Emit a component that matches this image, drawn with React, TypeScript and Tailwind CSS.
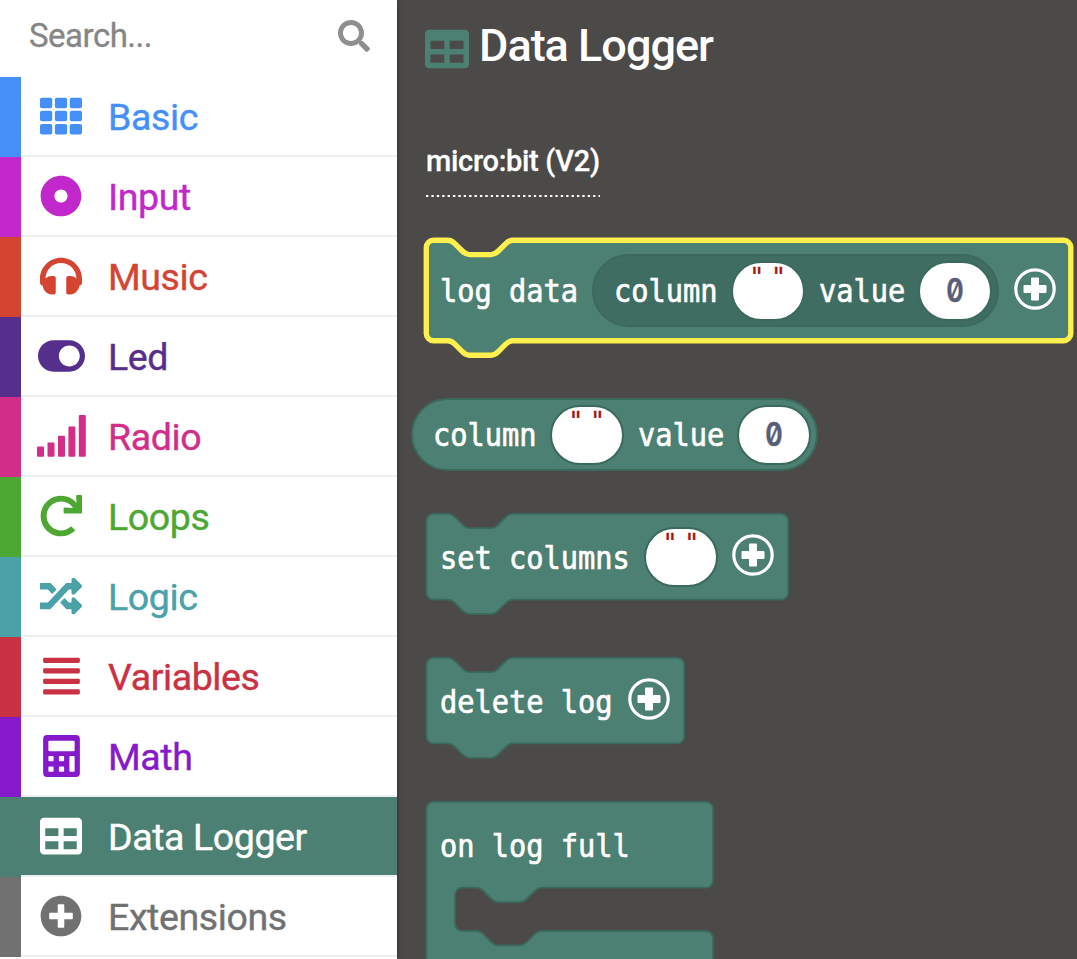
import React from "react";
import {
  FaTh,
  FaDotCircle,
  FaToggleOn,
  FaRedo,
  FaRandom,
  FaAlignJustify,
  FaTable,
  FaPlusCircle,
  FaSearch,
} from "react-icons/fa";

const CHAR_WIDTH = 17.25;

function HeadphonesIcon({ className }: { className?: string }) {
  return (
    <svg viewBox="0 0 512 512" fill="currentColor" className={className}>
      <path d="M256 32C114.500 32 0 146.500 0 288v51a32 32 0 0 0 17.700 28.600l15 7.400C42 434 84 480 144 480h24c13.300 0 24-10.700 24-24V280c0-13.300-10.700-24-24-24h-24c-28 0-58 10-77 30C69 178 152 96 256 96s187 82 189 190c-19-20-49-30-77-30h-24c-13.300 0-24 10.700-24 24v176c0 13.300 10.700 24 24 24h24c60 0 102-46 111.300-105l15-7.400A32 32 0 0 0 512 339v-51c0-141.500-114.500-256-256-256z" />
    </svg>
  );
}

function SignalIcon({ className }: { className?: string }) {
  return (
    <svg viewBox="0 0 49 42" fill="currentColor" className={className}>
      <rect x="0" y="31.4" width="7" height="10.4" rx="1" />
      <rect x="10.5" y="27.4" width="7" height="14.4" rx="1" />
      <rect x="21" y="20.8" width="7" height="21" rx="1" />
      <rect x="31.4" y="11.5" width="7" height="30.3" rx="1" />
      <rect x="41.8" y="0" width="7" height="41.8" rx="1" />
    </svg>
  );
}

function CalculatorIcon({ className }: { className?: string }) {
  return (
    <svg viewBox="0 0 448 512" fill="currentColor" fillRule="evenodd" className={className}>
      <path d="M48 0H400Q448 0 448 48V464Q448 512 400 512H48Q0 512 0 464V48Q0 0 48 0ZM76 70Q64 70 64 82V186Q64 198 76 198H372Q384 198 384 186V82Q384 70 372 70ZM76 256Q64 256 64 268V308Q64 320 76 320H116Q128 320 128 308V268Q128 256 116 256ZM204 256Q192 256 192 268V308Q192 320 204 320H244Q256 320 256 308V268Q256 256 244 256ZM76 384Q64 384 64 396V436Q64 448 76 448H116Q128 448 128 436V396Q128 384 116 384ZM204 384Q192 384 192 396V436Q192 448 204 448H244Q256 448 256 436V396Q256 384 244 384ZM332 256Q320 256 320 268V436Q320 448 332 448H372Q384 448 384 436V268Q384 256 372 256Z" />
    </svg>
  );
}

type IconType = React.ComponentType<{ className?: string }>;

const categories: {
  name: string;
  text: string;
  bar: string;
  Icon: IconType;
  size: string;
  active?: boolean;
}[] = [
  { name: "Basic", text: "text-[#458ff9]", bar: "bg-[#458ff9]", Icon: FaTh, size: "w-[42px] h-[42px]" },
  { name: "Input", text: "text-[#c127cb]", bar: "bg-[#c127cb]", Icon: FaDotCircle, size: "w-[42px] h-[42px]" },
  { name: "Music", text: "text-[#d54431]", bar: "bg-[#d54431]", Icon: HeadphonesIcon, size: "w-[42px] h-[42px]" },
  { name: "Led", text: "text-[#562e8c]", bar: "bg-[#562e8c]", Icon: FaToggleOn, size: "w-[47px] h-[42px]" },
  { name: "Radio", text: "text-[#d22d88]", bar: "bg-[#d22d88]", Icon: SignalIcon, size: "w-[49px] h-[42px]" },
  { name: "Loops", text: "text-[#4da833]", bar: "bg-[#4da833]", Icon: FaRedo, size: "w-[42px] h-[42px]" },
  { name: "Logic", text: "text-[#4aa2a8]", bar: "bg-[#4aa2a8]", Icon: FaRandom, size: "w-[42px] h-[42px]" },
  { name: "Variables", text: "text-[#ca3142]", bar: "bg-[#ca3142]", Icon: FaAlignJustify, size: "w-[37px] h-[42px]" },
  { name: "Math", text: "text-[#8619ca]", bar: "bg-[#8619ca]", Icon: CalculatorIcon, size: "w-[37px] h-[42px]" },
  { name: "Data Logger", text: "text-white", bar: "bg-[#4c8072]", Icon: FaTable, size: "w-[42px] h-[42px]", active: true },
  { name: "Extensions", text: "text-[#717171]", bar: "bg-[#717171]", Icon: FaPlusCircle, size: "w-[42px] h-[42px]" },
];

function Sidebar() {
  return (
    <aside className="z-10 flex h-full w-[397px] shrink-0 flex-col bg-white shadow-[0_0_4px_rgba(0,0,0,0.5)]">
      <div className="flex h-[77px] shrink-0 items-start justify-between pl-[29px] pr-[27px] pt-[18px]">
        <span className="text-[33px] leading-9 tracking-[-0.5px] text-[#868686] [-webkit-text-stroke:0.3px_currentColor]">
          Search...
        </span>
        <FaSearch className="mt-[2px] h-8 w-8 text-[#8f8f8f]" />
      </div>
      {categories.map(({ name, text, bar, Icon, size, active }) => (
        <div key={name} className="flex h-20 shrink-0">
          <div className={`w-[21px] ${bar}`} />
          <div
            className={`flex flex-1 items-center border-b-2 border-[#ecf0f0] pt-[1px] ${active ? "bg-[#4c8072]" : ""} ${text}`}
          >
            <span className="flex w-20 justify-center pb-[2px]">
              <Icon className={size} />
            </span>
            <span className="ml-[7px] whitespace-nowrap pt-[1px] text-[37.5px] leading-[44px] tracking-[-0.4px] [-webkit-text-stroke:0.4px_currentColor]">
              {name}
            </span>
          </div>
        </div>
      ))}
    </aside>
  );
}

const notch = "c3.6,0 5.4,1.8 7.2,3.6 l7.2,7.2 c1.8,1.8 3.6,3.6 7.2,3.6 h21.6 c3.6,0 5.4,-1.8 7.2,-3.6 l7.2,-7.2 c1.8,-1.8 3.6,-3.6 7.2,-3.6";
const tab = "c-3.6,0 -5.4,1.8 -7.2,3.6 l-7.2,7.2 c-1.8,1.8 -3.6,3.6 -7.2,3.6 h-21.6 c-3.6,0 -5.4,-1.8 -7.2,-3.6 l-7.2,-7.2 c-1.8,-1.8 -3.6,-3.6 -7.2,-3.6";

function statementPath(w: number, h: number) {
  return `M0,7.2 A7.2,7.2 0 0 1 7.2,0 H21.6 ${notch} H${w - 7.2} A7.2,7.2 0 0 1 ${w},7.2 V${h - 7.2} A7.2,7.2 0 0 1 ${w - 7.2},${h} H86.4 ${tab} H7.2 A7.2,7.2 0 0 1 0,${h - 7.2} Z`;
}

function Shape({ d, selected }: { d: string; selected?: boolean }) {
  return (
    <svg className="absolute inset-0 h-full w-full overflow-visible">
      <path
        d={d}
        transform={selected ? "translate(0.3 0.2)" : "translate(0.4 0.8)"}
        fill="#4c8072"
        stroke={selected ? "#fff04d" : "#3b6a5d"}
        strokeWidth={selected ? 5.4 : 1.8}
      />
    </svg>
  );
}

function Label({ children }: { children: string }) {
  return (
    <span
      className="relative block h-8 whitespace-pre font-['DejaVu_Sans_Mono',monospace] text-[31.5px] leading-8 text-white [-webkit-text-stroke:0.7px_currentColor]"
      style={{ width: children.length * CHAR_WIDTH }}
    >
      <span className="inline-block origin-left scale-x-[0.91]">{children}</span>
    </span>
  );
}

function TextField() {
  return (
    <span className="relative flex h-[60px] w-[74px] justify-center rounded-[30px] border-2 border-[#3b6a5d] bg-white">
      <span className="-ml-1 mt-[-1px] whitespace-pre font-['DejaVu_Sans_Mono',monospace] text-[25px] leading-[30px] tracking-[-4.2px] text-[#a31515] [-webkit-text-stroke:0.3px_currentColor]">
        {'" "'}
      </span>
    </span>
  );
}

function NumberField() {
  return (
    <span className="relative flex h-[60px] w-[74px] items-center justify-center rounded-[30px] border-2 border-[#3b6a5d] bg-white">
      <span className="mb-[2px] inline-block scale-x-[0.8] font-['Inter',sans-serif] text-[33px] font-semibold leading-8 text-[#575e75] [-webkit-text-stroke:0.5px_currentColor] [font-feature-settings:'zero']">
        0
      </span>
    </span>
  );
}

function PlusButton() {
  return (
    <svg viewBox="0 0 42 42" className="relative mt-[-3px] h-[42px] w-[42px] shrink-0">
      <circle cx="21" cy="21" r="19.2" fill="none" stroke="#fff" strokeWidth="3.2" />
      <path
        d="M18,9.5h6q1,0 1,1v6.500h6.500q1,0 1,1v6q0,1 -1,1h-6.500v6.500q0,1 -1,1h-6q-1,0 -1,-1v-6.500h-6.500q-1,0 -1,-1v-6q0,-1 1,-1h6.500v-6.500q0,-1 1,-1z"
        fill="#fff"
      />
    </svg>
  );
}

function ColumnValue() {
  return (
    <>
      <Label>column</Label>
      <span className="ml-[13px]">
        <TextField />
      </span>
      <span className="ml-[14px]">
        <Label>value</Label>
      </span>
      <span className="ml-[13px]">
        <NumberField />
      </span>
    </>
  );
}

export default function App() {
  return (
    <div className="flex h-[959px] w-[1077px] overflow-hidden bg-[#4c4949] font-['Roboto',sans-serif]">
      <Sidebar />
      <main className="flex flex-1 flex-col items-start pl-[29px]">
        <h1 className="mt-5 ml-[-1px] flex h-[52px] items-center text-[45px] font-medium leading-[52px] tracking-[-1px] text-white">
          <FaTable className="mr-[10px] mt-[5px] h-11 w-11 text-[#4c8072]" />
          Data Logger
        </h1>
        <h2 className="mt-[72px] h-[35px] text-[29px] font-medium leading-[35px] tracking-[-0.3px] text-white [-webkit-text-stroke:0.3px_currentColor]">
          micro:bit (V2)
        </h2>
        <svg className="mt-4 h-[2px] w-[174px]">
          <line x1="0" y1="1" x2="174" y2="1" stroke="#fff" strokeWidth="2" strokeDasharray="2.4 2.99" />
        </svg>

        <div className="relative mt-[43px] flex h-[101px] w-[645px] items-center pl-[14px]">
          <Shape d={statementPath(644.5, 100.6)} selected />
          <Label>log data</Label>
          <span className="relative ml-[14px] flex h-[73px] w-[407px] items-center rounded-full border-2 border-[#3b6a5d] bg-[#406d61] pl-5">
            <ColumnValue />
          </span>
          <span className="ml-[15px]">
            <PlusButton />
          </span>
        </div>

        <div className="mt-[57px] ml-[-15px] flex h-[73px] w-[407px] items-center rounded-full border-2 border-[#3b6a5d] bg-[#4c8072] pl-5">
          <ColumnValue />
        </div>

        <div className="relative mt-[42px] flex h-[87px] w-[362px] items-center pl-[14px]">
          <Shape d={statementPath(361.8, 85.8)} />
          <span className="pt-[2px]">
            <Label>set columns</Label>
          </span>
          <span className="ml-[14px]">
            <TextField />
          </span>
          <span className="ml-[14px]">
            <PlusButton />
          </span>
        </div>

        <div className="relative mt-[57px] flex h-[87px] w-[258px] items-center pl-[14px]">
          <Shape d={statementPath(257.8, 85.6)} />
          <span className="pt-[2px]">
            <Label>delete log</Label>
          </span>
          <span className="ml-[15px]">
            <PlusButton />
          </span>
        </div>

        <div className="relative mt-[57px] flex h-[87px] w-[287px] shrink-0 items-center pl-[14px] pt-[2px]">
          <Shape
            d={`M0,7.200 A7.200,7.200 0 0 1 7.200,0 H279.400 A7.200,7.200 0 0 1 286.600,7.200 V78.700 A7.200,7.200 0 0 1 279.400,85.900 H115 ${tab} H35.800 A7.200,7.200 0 0 0 28.600,93.100 V122 A7.200,7.200 0 0 0 35.800,129.200 H50.200 ${notch} H279.400 A7.200,7.200 0 0 1 286.600,136.400 V190 H0 Z`}
          />
          <Label>on log full</Label>
        </div>
      </main>
    </div>
  );
}
